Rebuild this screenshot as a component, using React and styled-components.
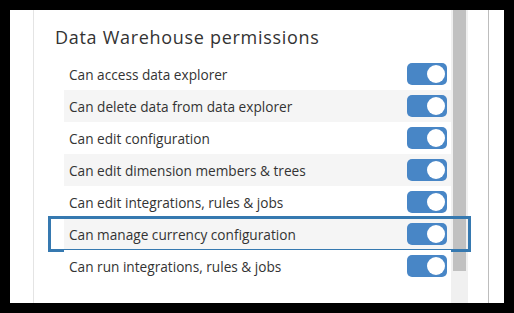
import React from 'react'
import styled, { createGlobalStyle } from 'styled-components'

const GlobalStyle = createGlobalStyle`
  html, body {
    margin: 0;
    padding: 0;
    background: #000;
  }
  * { box-sizing: border-box; }
`

const Frame = styled.div`
  width: 514px;
  height: 313px;
  padding: 10px;
  background: #000;
`

const Panel = styled.div`
  display: flex;
  height: 100%;
  padding-right: 15px;
  background: #fff;
`

const Gutter = styled.div`
  width: 24px;
  border-right: 1px solid #e4e4e4;
`

const Content = styled.div`
  flex: 1;
  padding: 15px 0 0 21px;
  position: relative;
  z-index: 1;
`

const Title = styled.h2`
  margin: 0 0 9px;
  font-family: "Open Sans", sans-serif;
  font-weight: 400;
  font-size: 18px;
  line-height: 24px;
  color: #333;
  letter-spacing: 0.7px;
`

const List = styled.div`
  margin-left: 9px;
`

const Row = styled.div`
  position: relative;
  display: flex;
  align-items: center;
  justify-content: space-between;
  height: 32px;
  padding: 0 4px 0 5px;
  background: ${p => (p.$shaded ? '#f5f5f5' : '#fff')};
  font-family: "Open Sans", sans-serif;
  font-size: 13.65px;
  color: #333;

  ${p => p.$focused && `
    &::after {
      content: '';
      position: absolute;
      top: -2px;
      bottom: -2px;
      left: -16px;
      right: -20px;
      border: 3px solid #3679b0;
      pointer-events: none;
    }
  `}
`

const Toggle = styled.span`
  position: relative;
  width: 40px;
  height: 22px;
  border-radius: 5px;
  background: ${p => (p.$on ? '#4886c6' : '#ccc')};

  &::before {
    content: '';
    position: absolute;
    top: 2px;
    right: ${p => (p.$on ? '2px' : '21px')};
    width: 18px;
    height: 18px;
    border-radius: 50%;
    background: #fff;
  }
`

const Track = styled.div`
  width: 17px;
  background: #f0f0f0;
  padding: 0 2px;
`

const Thumb = styled.div`
  height: 261px;
  background: #c1c1c1;
`

const Side = styled.div`
  width: 21px;
  border-right: 1px solid #bdbdbd;
`

const permissions = [
  'Can access data explorer',
  'Can delete data from data explorer',
  'Can edit configuration',
  'Can edit dimension members & trees',
  'Can edit integrations, rules & jobs',
  'Can manage currency configuration',
  'Can run integrations, rules & jobs',
]

export default function App() {
  return (
    <>
      <GlobalStyle />
      <Frame>
        <Panel>
          <Gutter />
          <Content>
            <Title>Data Warehouse permissions</Title>
            <List>
              {permissions.map((label, i) => (
                <Row key={label} $shaded={i % 2 === 1} $focused={i === 5}>
                  <span>{label}</span>
                  <Toggle $on />
                </Row>
              ))}
            </List>
          </Content>
          <Track>
            <Thumb />
          </Track>
          <Side />
        </Panel>
      </Frame>
    </>
  )
}
